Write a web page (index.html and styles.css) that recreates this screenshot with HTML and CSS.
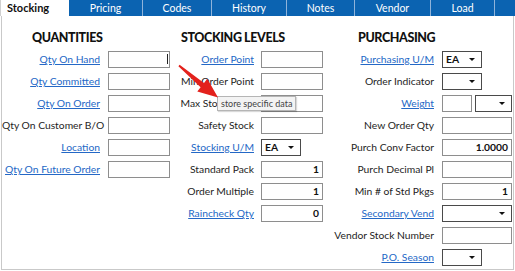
FILE: index.html
```html
<!DOCTYPE html>
<html lang="en">
<head>
    <meta charset="UTF-8">
    <title>Item Maintenance - Stocking</title>
    <link rel="stylesheet" href="styles.css">
</head>
<body>

    <!-- Tab strip -->
    <div class="tabs">
        <div class="tab active">Stocking</div>
        <div class="tab w74">Pricing</div>
        <div class="tab w69">Codes</div>
        <div class="tab w75">History</div>
        <div class="tab w68">Notes</div>
        <div class="tab w76">Vendor</div>
        <div class="tab w64">Load</div>
        <div class="tab rest"></div>
    </div>

    <!-- Stocking panel -->
    <div class="panel">

        <section class="group qty">
            <h2>QUANTITIES</h2>
            <div class="rows">
                <a class="lbl link" href="#">Qty On Hand</a>
                <div class="box"><span class="cursor"></span></div>
                <a class="lbl link" href="#">Qty Committed</a>
                <div class="box"></div>
                <a class="lbl link" href="#">Qty On Order</a>
                <div class="box"></div>
                <span class="lbl">Qty On Customer B/O</span>
                <div class="box"></div>
                <a class="lbl link" href="#">Location</a>
                <div class="box"></div>
                <a class="lbl link" href="#">Qty On Future Order</a>
                <div class="box"></div>
            </div>
        </section>

        <section class="group levels">
            <h2>STOCKING LEVELS</h2>
            <div class="rows">
                <a class="lbl link" href="#">Order Point</a>
                <div class="box"></div>
                <span class="lbl">Min Order Point</span>
                <div class="box"></div>
                <span class="lbl">Max Stock Point</span>
                <div class="box"></div>
                <span class="lbl">Safety Stock</span>
                <div class="box"></div>
                <a class="lbl link" href="#">Stocking U/M</a>
                <div class="dd short">EA<span class="arrow"></span></div>
                <span class="lbl">Standard Pack</span>
                <div class="box num">1</div>
                <span class="lbl">Order Multiple</span>
                <div class="box num">1</div>
                <a class="lbl link" href="#">Raincheck Qty</a>
                <div class="box num">0</div>
            </div>
        </section>

        <section class="group purch">
            <h2>PURCHASING</h2>
            <div class="rows">
                <a class="lbl link" href="#">Purchasing U/M</a>
                <div class="dd short">EA<span class="arrow"></span></div>
                <span class="lbl">Order Indicator</span>
                <div class="dd short"><span class="arrow"></span></div>
                <a class="lbl link" href="#">Weight</a>
                <div class="pair">
                    <div class="box small"></div>
                    <div class="dd"><span class="arrow"></span></div>
                </div>
                <span class="lbl">New Order Qty</span>
                <div class="box"></div>
                <span class="lbl">Purch Conv Factor</span>
                <div class="box num">1.0000</div>
                <span class="lbl">Purch Decimal Pl</span>
                <div class="box"></div>
                <span class="lbl">Min # of Std Pkgs</span>
                <div class="box num">1</div>
                <a class="lbl link" href="#">Secondary Vend</a>
                <div class="dd"><span class="arrow"></span></div>
                <span class="lbl">Vendor Stock Number</span>
                <div class="box"></div>
                <a class="lbl link" href="#">P.O. Season</a>
                <div class="dd short"><span class="arrow"></span></div>
            </div>
        </section>

        <div class="tooltip">store specific data</div>
    </div>

    <!-- Callout arrow -->
    <svg class="callout" width="515" height="271" viewBox="0 0 515 271">
        <polygon points="179.6,64.7 204,82.9 207.3,78.8 218,97.5 197.3,91.4 200.6,87.3 178.4,66.3" fill="#e3211c"/>
    </svg>

</body>
</html>
```

FILE: styles.css
```css
body {
    margin: 0;
    width: 515px;
    height: 271px;
    position: relative;
    background: #fff;
    font-family: 'Lato', 'Open Sans', sans-serif;
    font-size: 10.3px;
    color: #1e1e1e;
    overflow: hidden;
}

/* Tabs */
.tabs {
    display: flex;
    height: 16px;
}

.tab {
    box-sizing: border-box;
    height: 16px;
    line-height: 16px;
    background-color: #0b63b1;
    color: #fff;
    text-align: center;
    font-size: 10.5px;
    border-right: 1px solid #8fb3da;
}

.tab.active {
    width: 69px;
    background-color: #fff;
    color: #111;
    font-weight: bold;
    font-size: 11px;
    text-align: left;
    padding-left: 6px;
    border-left: 1px solid #d0d0d0;
    border-right: none;
}

.w74 { width: 74px; }
.w69 { width: 69px; }
.w75 { width: 75px; }
.w68 { width: 68px; }
.w76 { width: 76px; }
.w64 { width: 64px; }
.rest { flex: 1; border-right: none; }

/* Panel */
.panel {
    position: relative;
    display: flex;
    width: 511px;
    margin-left: 1px;
    padding: 14px 0 3px;
    border: 1px solid #c9c9c9;
    border-top: none;
}

.group h2 {
    margin: 0 0 5px;
    height: 16px;
    line-height: 16px;
    font-size: 12.5px;
    letter-spacing: -0.4px;
    font-weight: 900;
    color: #111;
}

.qty h2 { padding-left: 30px; }
.levels h2 { padding-left: 11px; }
.purch h2 { padding-left: 35px; }

.rows {
    display: grid;
    row-gap: 5px;
    grid-auto-rows: 17px;
    align-items: center;
}

.qty .rows { grid-template-columns: 98px 62px; column-gap: 8px; }
.levels .rows { grid-template-columns: 84px 62px; column-gap: 7px; }
.purch .rows { grid-template-columns: 111px 70px; column-gap: 8px; }

.lbl {
    text-align: right;
    white-space: nowrap;
    line-height: 17px;
}

.link {
    color: #2468c6;
    text-decoration: underline;
}

/* Inputs */
.box {
    position: relative;
    box-sizing: border-box;
    height: 17px;
    border: 1px solid #8e8e8e;
    background: #fff;
}

.box.num {
    text-align: right;
    padding-right: 3px;
    font-weight: bold;
    line-height: 15px;
    color: #111;
}

.box.small { width: 30px; }

.cursor {
    position: absolute;
    left: 58px;
    top: 2px;
    width: 1px;
    height: 10px;
    background: #222;
}

.dd {
    position: relative;
    box-sizing: border-box;
    height: 17px;
    border: 1px solid #4a4a4a;
    padding-left: 3px;
    line-height: 15px;
    font-weight: bold;
    color: #111;
    background: #fff;
}

.dd.short { width: 40px; }

.pair {
    display: flex;
    gap: 3px;
}

.pair .dd { flex: 1; }

.arrow {
    position: absolute;
    right: 6px;
    top: 6px;
    width: 0;
    height: 0;
    border-left: 3px solid transparent;
    border-right: 3px solid transparent;
    border-top: 3px solid #111;
}

/* Tooltip over Max Stock Point */
.tooltip {
    position: absolute;
    left: 215px;
    top: 80px;
    height: 13px;
    padding: 0 3px;
    line-height: 13px;
    font-size: 9px;
    color: #444;
    background: #f3f3f3;
    border: 1px solid #b5b5b5;
    box-shadow: 1px 1px 1px rgba(0, 0, 0, 0.15);
    white-space: nowrap;
}

.callout {
    position: absolute;
    left: 0;
    top: 0;
    pointer-events: none;
}
```
